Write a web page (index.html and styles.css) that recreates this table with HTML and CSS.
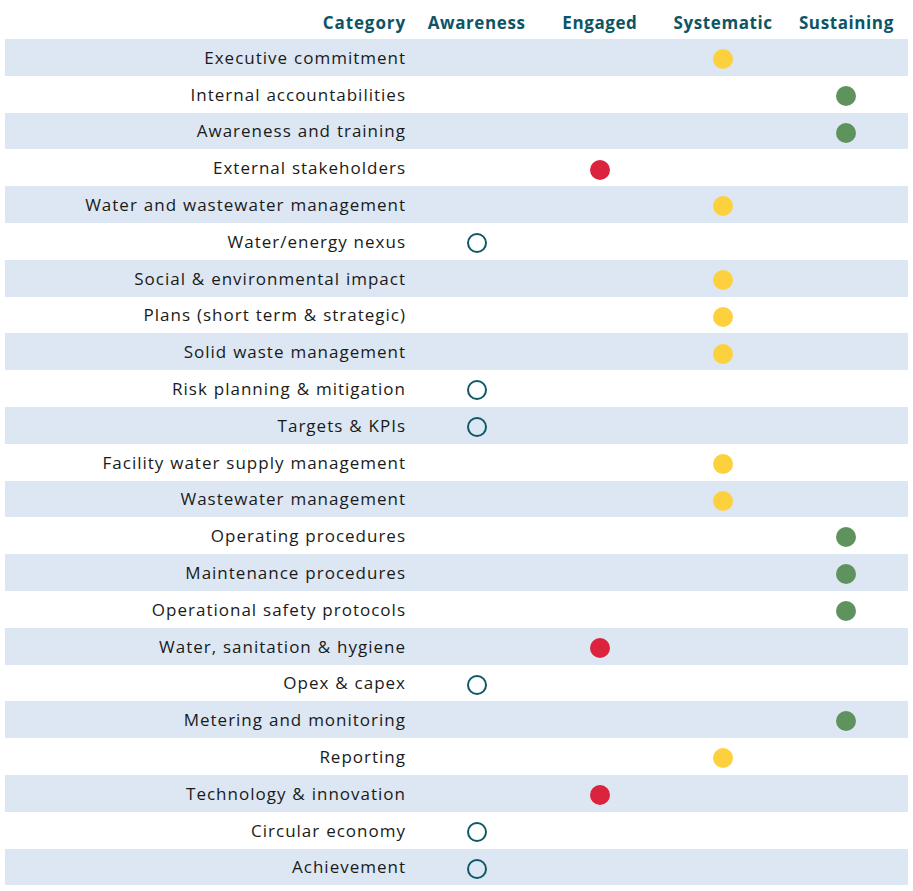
FILE: index.html
```html
<!DOCTYPE html>
<html lang="en">
<head>
<meta charset="utf-8">
<title>Maturity matrix</title>
<link rel="stylesheet" href="styles.css">
</head>
<body>
<table class="matrix">
  <colgroup>
    <col class="col-cat">
    <col class="col-lvl"><col class="col-lvl"><col class="col-lvl"><col class="col-lvl">
  </colgroup>
  <thead>
    <tr>
      <th class="cat">Category</th>
      <th>Awareness</th>
      <th>Engaged</th>
      <th>Systematic</th>
      <th>Sustaining</th>
    </tr>
  </thead>
  <tbody>
    <tr><td class="cat">Executive commitment</td><td></td><td></td><td><span class="dot yellow"></span></td><td></td></tr>
    <tr><td class="cat">Internal accountabilities</td><td></td><td></td><td></td><td><span class="dot green"></span></td></tr>
    <tr><td class="cat">Awareness and training</td><td></td><td></td><td></td><td><span class="dot green"></span></td></tr>
    <tr><td class="cat">External stakeholders</td><td></td><td><span class="dot red"></span></td><td></td><td></td></tr>
    <tr><td class="cat">Water and wastewater management</td><td></td><td></td><td><span class="dot yellow"></span></td><td></td></tr>
    <tr><td class="cat">Water/energy nexus</td><td><span class="dot ring"></span></td><td></td><td></td><td></td></tr>
    <tr><td class="cat">Social &amp; environmental impact</td><td></td><td></td><td><span class="dot yellow"></span></td><td></td></tr>
    <tr><td class="cat">Plans (short term &amp; strategic)</td><td></td><td></td><td><span class="dot yellow"></span></td><td></td></tr>
    <tr><td class="cat">Solid waste management</td><td></td><td></td><td><span class="dot yellow"></span></td><td></td></tr>
    <tr><td class="cat">Risk planning &amp; mitigation</td><td><span class="dot ring"></span></td><td></td><td></td><td></td></tr>
    <tr><td class="cat">Targets &amp; KPIs</td><td><span class="dot ring"></span></td><td></td><td></td><td></td></tr>
    <tr><td class="cat">Facility water supply management</td><td></td><td></td><td><span class="dot yellow"></span></td><td></td></tr>
    <tr><td class="cat">Wastewater management</td><td></td><td></td><td><span class="dot yellow"></span></td><td></td></tr>
    <tr><td class="cat">Operating procedures</td><td></td><td></td><td></td><td><span class="dot green"></span></td></tr>
    <tr><td class="cat">Maintenance procedures</td><td></td><td></td><td></td><td><span class="dot green"></span></td></tr>
    <tr><td class="cat">Operational safety protocols</td><td></td><td></td><td></td><td><span class="dot green"></span></td></tr>
    <tr><td class="cat">Water, sanitation &amp; hygiene</td><td></td><td><span class="dot red"></span></td><td></td><td></td></tr>
    <tr><td class="cat">Opex &amp; capex</td><td><span class="dot ring"></span></td><td></td><td></td><td></td></tr>
    <tr><td class="cat">Metering and monitoring</td><td></td><td></td><td></td><td><span class="dot green"></span></td></tr>
    <tr><td class="cat">Reporting</td><td></td><td></td><td><span class="dot yellow"></span></td><td></td></tr>
    <tr><td class="cat">Technology &amp; innovation</td><td></td><td><span class="dot red"></span></td><td></td><td></td></tr>
    <tr><td class="cat">Circular economy</td><td><span class="dot ring"></span></td><td></td><td></td><td></td></tr>
    <tr><td class="cat">Achievement</td><td><span class="dot ring"></span></td><td></td><td></td><td></td></tr>
  </tbody>
</table>
</body>
</html>
```
FILE: styles.css
```css
html, body {
  margin: 0;
  padding: 0;
  background: #ffffff;
}

body {
  padding: 0 5px 0 5px;
  font-family: "Open Sans", "Noto Sans", sans-serif;
  color: #1a1a1a;
}

.matrix {
  width: 903px;
  border-collapse: collapse;
  table-layout: fixed;
}

.col-cat {
  width: 410px;
}

.matrix th {
  height: 39px;
  padding: 5px 0 0 0;
  box-sizing: border-box;
  font-size: 17px;
  font-weight: 700;
  letter-spacing: 0.6px;
  color: #0d5566;
  text-align: center;
  vertical-align: middle;
  white-space: nowrap;
}

.matrix td {
  height: 36.8px;
  padding: 0;
  font-size: 17px;
  text-align: center;
  vertical-align: middle;
  white-space: nowrap;
}

.matrix td.cat {
  letter-spacing: 1px;
  word-spacing: 0.5px;
}

.matrix .cat {
  text-align: right;
  padding-right: 9px;
}

.matrix th.cat {
  letter-spacing: 0.9px;
}

.matrix tbody tr:nth-child(odd) {
  background: #dce7f3;
}

.dot {
  display: inline-block;
  width: 20px;
  height: 20px;
  border-radius: 50%;
  vertical-align: middle;
  box-sizing: border-box;
}

.dot.yellow { background: #fdd13d; }
.dot.green { background: #5f935e; }
.dot.red { background: #dc233d; }
.dot.ring {
  border: 2px solid #0f5867;
  background: transparent;
}
```
